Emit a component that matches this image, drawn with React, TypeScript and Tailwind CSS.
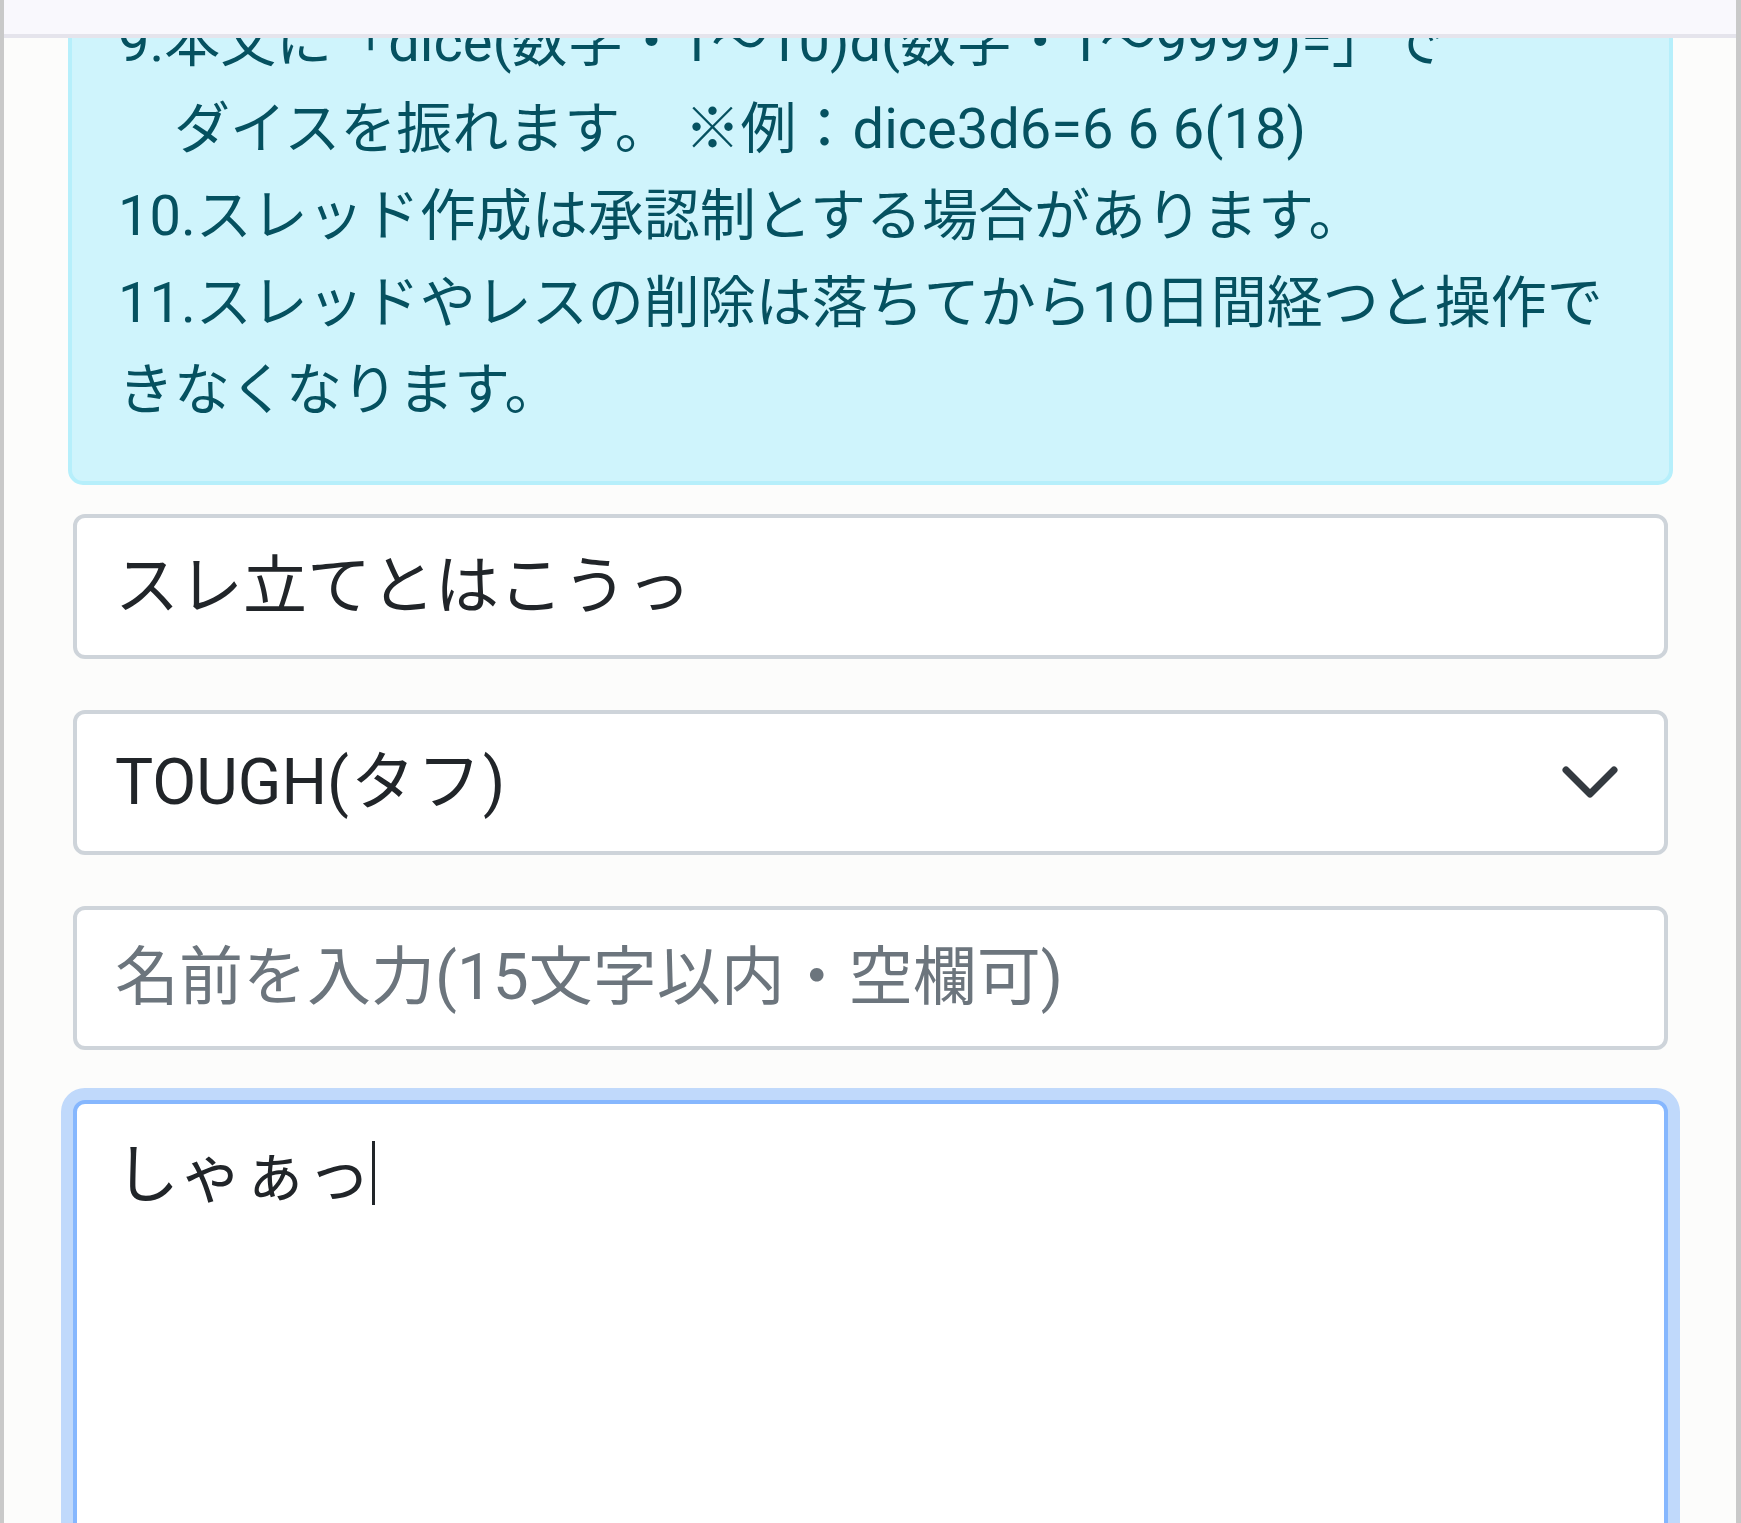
import React from "react";

const font = { fontFamily: 'Roboto, "Noto Sans CJK JP", sans-serif' };

export default function App() {
  return (
    <div
      className="relative h-[1523px] w-full overflow-hidden bg-[#fcfcfb] border-l-4 border-r-[5px] border-[#c9c9c9]"
      style={font}
    >
      {/* fixed top bar overlaying scrolled content */}
      <div className="absolute left-[-4px] right-[-5px] top-0 z-10 h-[38px] bg-[#f9f8fd] border-b-4 border-[#e5e4ec]" />

      <div className="flex flex-col">
        {/* alert */}
        <div className="ml-[64px] mr-[63px] mt-[-52px] rounded-[15px] border-4 border-[#b6effb] bg-[#cff4fc] px-[46px] py-[47px] text-[56px] leading-[87px] text-[#055160]">
          9.本文に「dice(数字・1〜10)d(数字・1〜9999)=」で
          <br />
          {"\u3000ダイスを振れます。 ※例：dice3d6=6 6 6(18)"}
          <br />
          10.スレッド作成は承認制とする場合があります。
          <br />
          11.スレッドやレスの削除は落ちてから10日間経つと操作できなくなります。
        </div>

        {/* title input */}
        <div className="ml-[69px] mr-[68px] mt-[29px] flex h-[145px] items-center rounded-[12px] border-4 border-[#ced4da] bg-white px-[38px] text-[64px] text-[#212529]">
          スレ立てとはこうっ
        </div>

        {/* select */}
        <div className="ml-[69px] mr-[68px] mt-[51px] flex h-[145px] items-center justify-between rounded-[12px] border-4 border-[#ced4da] bg-white pl-[38px] pr-[46px] text-[64px] text-[#212529]">
          <span>
            TOUGH<span className="tracking-[2px]">(タフ)</span>
          </span>
          <svg width="56" height="38" viewBox="0 0 56 38" fill="none">
            <polyline
              points="4,6 28,30 52,6"
              stroke="#343a40"
              strokeWidth="7"
              strokeLinecap="round"
              strokeLinejoin="round"
            />
          </svg>
        </div>

        {/* name input */}
        <div className="ml-[69px] mr-[68px] mt-[51px] flex h-[144px] items-center rounded-[12px] border-4 border-[#ced4da] bg-white px-[38px] text-[64px] text-[#6c757d]">
          名前を入力(15文字以内・空欄可)
        </div>

        {/* textarea (focused) */}
        <div className="ml-[69px] mr-[68px] mt-[50px] h-[700px] rounded-[12px] border-4 border-[#86b7fe] bg-white px-[38px] pt-[25px] text-[64px] leading-[94px] text-[#212529] shadow-[0_0_0_12px_rgba(13,110,253,0.25)]">
          <span>しゃぁっ</span>
          <span className="ml-[1px] inline-block h-[64px] w-[3px] translate-y-[8px] bg-[#212529]" />
        </div>
      </div>
    </div>
  );
}
